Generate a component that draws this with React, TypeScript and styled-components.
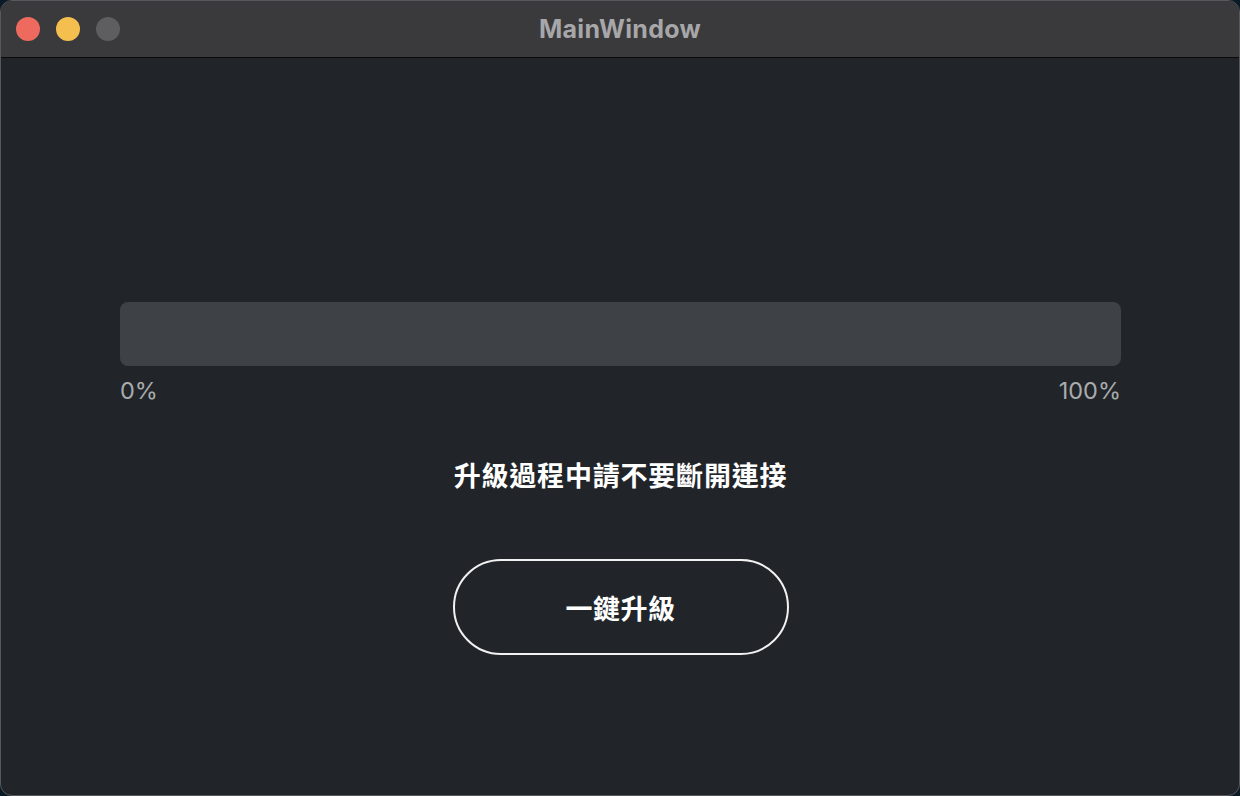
import React from "react";
import styled, { createGlobalStyle } from "styled-components";

const Global = createGlobalStyle`
  html, body { margin: 0; padding: 0; background: #0b1b26; }
  body { width: 1240px; height: 796px; overflow: hidden; }
  * { box-sizing: border-box; }
`;

const Window = styled.div`
  width: 1240px;
  height: 796px;
  border-radius: 12px;
  overflow: hidden;
  background: #212529;
  border: 1px solid #56585c;
  display: flex;
  flex-direction: column;
  font-family: Inter, "Noto Sans CJK TC", sans-serif;
`;

const TitleBar = styled.div`
  height: 57px;
  flex: none;
  background: #3a3a3c;
  border-bottom: 1px solid #0a0a0a;
  display: grid;
  grid-template-columns: 1fr auto 1fr;
  align-items: center;
`;

const Lights = styled.div`
  display: flex;
  gap: 16px;
  padding-left: 15px;
`;

const Light = styled.span<{ $c: string }>`
  width: 24px;
  height: 24px;
  border-radius: 50%;
  background: ${(p) => p.$c};
`;

const Title = styled.div`
  font-family: Inter, sans-serif;
  font-weight: 700;
  font-size: 25px;
  color: #a7a7a9;
  letter-spacing: 0.3px;
  margin-top: -1px;
`;

const Content = styled.div`
  flex: 1;
  display: flex;
  flex-direction: column;
  align-items: center;
  padding: 244px 118px 0 119px;
`;

const Track = styled.div`
  width: 100%;
  height: 64px;
  border-radius: 8px;
  background: #3e4146;
`;

const Labels = styled.div`
  width: 100%;
  display: flex;
  justify-content: space-between;
  margin-top: 10px;
  font-size: 23.5px;
  line-height: 30px;
  color: #a9abad;
  padding-right: 0;
`;

const Notice = styled.div`
  margin-top: 51px;
  font-family: "Noto Sans CJK TC", sans-serif;
  font-weight: 700;
  font-size: 27px;
  line-height: 36px;
  color: #ffffff;
  letter-spacing: 0.8px;
`;

const Button = styled.button`
  margin-top: 66px;
  width: 336px;
  height: 96px;
  border-radius: 48px;
  border: 2px solid #f2f2f2;
  background: transparent;
  color: #ffffff;
  font-family: "Noto Sans CJK TC", sans-serif;
  font-weight: 700;
  font-size: 27px;
  letter-spacing: 0.5px;
  padding: 0;
`;

export default function App() {
  return (
    <>
      <Global />
      <Window>
        <TitleBar>
          <Lights>
            <Light $c="#ee6a5f" />
            <Light $c="#f5bf4f" />
            <Light $c="#5e5e60" />
          </Lights>
          <Title>MainWindow</Title>
          <div />
        </TitleBar>
        <Content>
          <Track />
          <Labels>
            <span>0%</span>
            <span>100%</span>
          </Labels>
          <Notice>升級過程中請不要斷開連接</Notice>
          <Button>一鍵升級</Button>
        </Content>
      </Window>
    </>
  );
}
